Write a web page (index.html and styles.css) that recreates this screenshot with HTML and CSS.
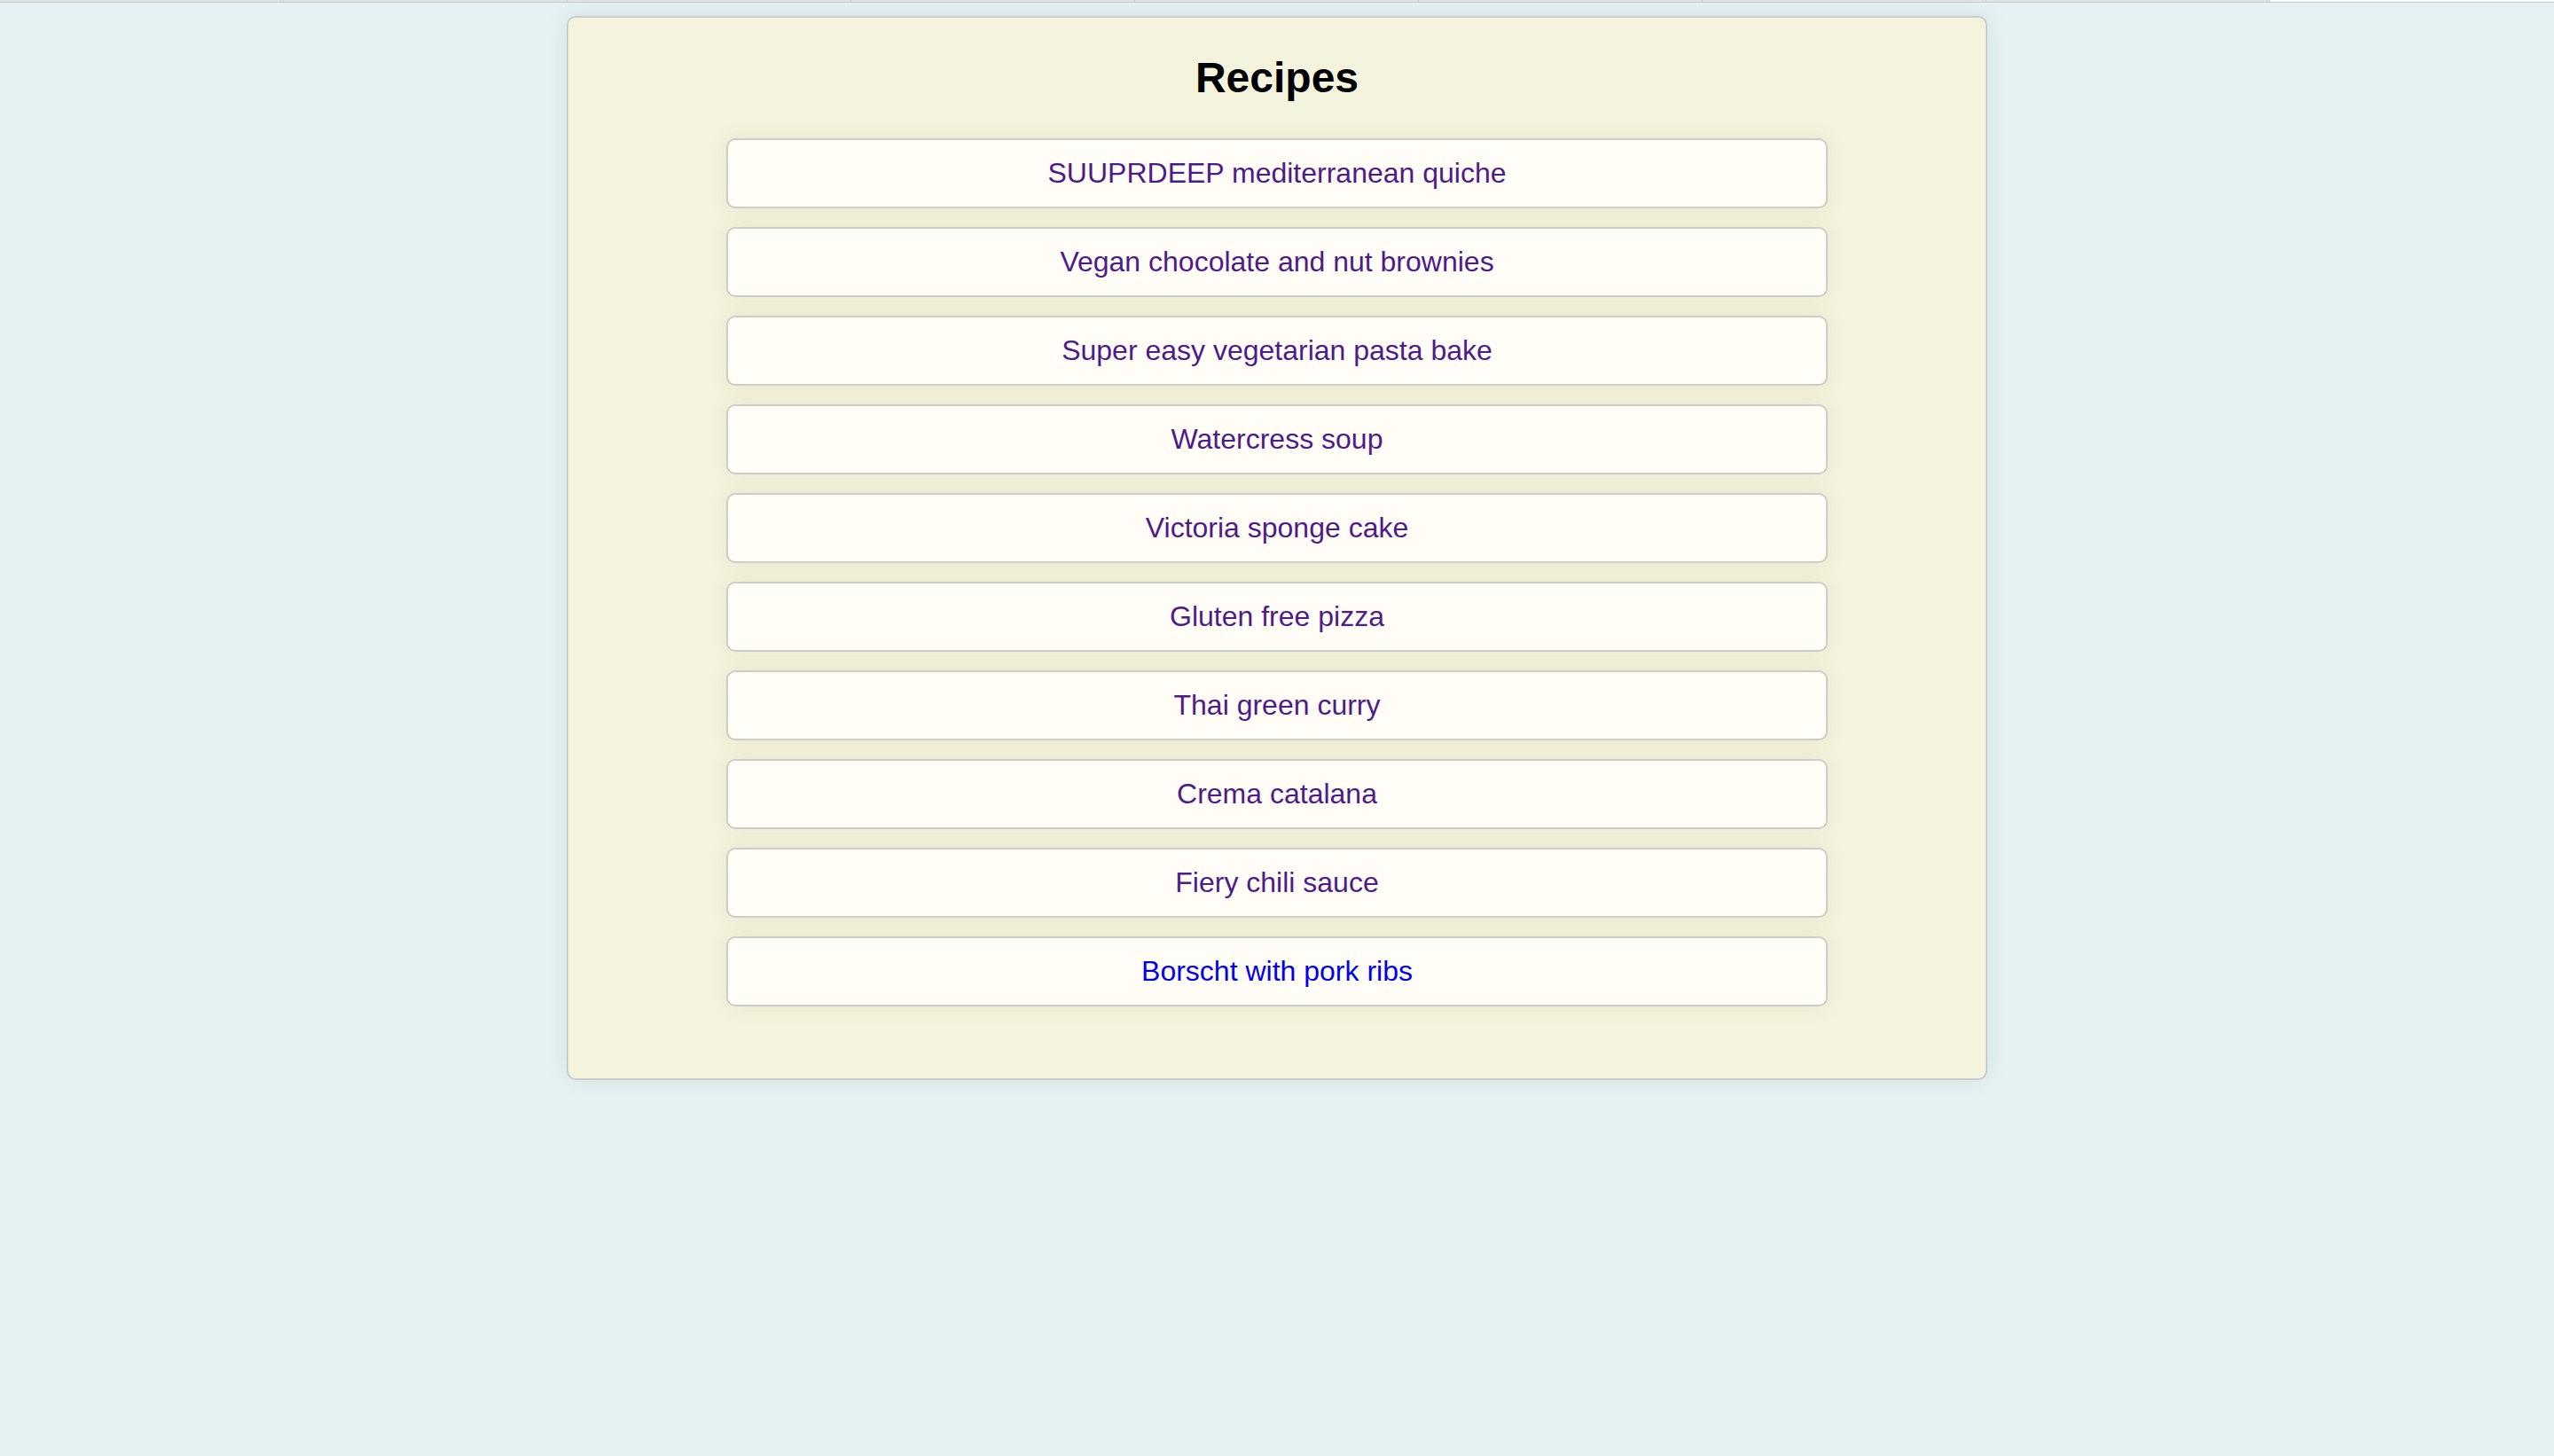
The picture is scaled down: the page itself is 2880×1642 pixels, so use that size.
FILE: index.html
```html
<!DOCTYPE html>
<html lang="en">
<head>
<meta charset="utf-8">
<title>Recipes</title>
<link rel="stylesheet" href="styles.css">
</head>
<body>
<div class="strip">
  <span class="cell"></span><span class="cell"></span><span class="cell"></span>
  <span class="cell"></span><span class="cell"></span><span class="cell"></span>
  <span class="cell"></span><span class="cell"></span><span class="cell cell-last"></span>
</div>
<main class="card">
  <h2 class="title">Recipes</h2>
  <ul class="list">
    <li class="item"><a class="link visited" href="#">SUUPRDEEP mediterranean quiche</a></li>
    <li class="item"><a class="link visited" href="#">Vegan chocolate and nut brownies</a></li>
    <li class="item"><a class="link visited" href="#">Super easy vegetarian pasta bake</a></li>
    <li class="item"><a class="link visited" href="#">Watercress soup</a></li>
    <li class="item"><a class="link visited" href="#">Victoria sponge cake</a></li>
    <li class="item"><a class="link visited" href="#">Gluten free pizza</a></li>
    <li class="item"><a class="link visited" href="#">Thai green curry</a></li>
    <li class="item"><a class="link visited" href="#">Crema catalana</a></li>
    <li class="item"><a class="link visited" href="#">Fiery chili sauce</a></li>
    <li class="item"><a class="link fresh" href="#">Borscht with pork ribs</a></li>
  </ul>
</main>
</body>
</html>
```
FILE: styles.css
```css
html, body {
  margin: 0;
  padding: 0;
}
body {
  background: #e6f2f2;
  font-family: "Liberation Sans", Arial, Helvetica, sans-serif;
  min-height: 1642px;
}
.strip {
  display: flex;
  height: 2px;
  border-bottom: 1px solid #c2cbcb;
}
.cell {
  flex: 0 0 320px;
  background: #e2e2e2;
  border-right: 1px solid #d0d0d0;
  box-sizing: border-box;
}
.cell-last {
  flex: 1 1 auto;
  background: #ffffff;
  border-right: none;
}
.card {
  box-sizing: border-box;
  width: 1602px;
  margin: 15px auto 0;
  border: 2px solid #cccccc;
  border-radius: 10px;
  background: #f4f4de;
  padding: 41px 0 81px;
  box-shadow: 0 0 28px rgba(0, 40, 40, 0.09);
}
.title {
  margin: 0;
  font-size: 48px;
  line-height: 54px;
  font-weight: bold;
  text-align: center;
  color: #000000;
}
.list {
  list-style: none;
  margin: 41px auto 0;
  padding: 0;
  width: 1242px;
  display: flex;
  flex-direction: column;
  gap: 21px;
}
.item {
  box-sizing: border-box;
  height: 79px;
  border: 2px solid #cccccc;
  border-radius: 10px;
  background: #fffdf5;
  box-shadow: 0 0 24px rgba(90, 90, 30, 0.09);
  padding: 19px 0 0;
  line-height: 37px;
  font-size: 32px;
  text-align: center;
}
.link {
  text-decoration: none;
}
.visited {
  color: #4f1b88;
}
.fresh {
  color: #0000ee;
}
```
